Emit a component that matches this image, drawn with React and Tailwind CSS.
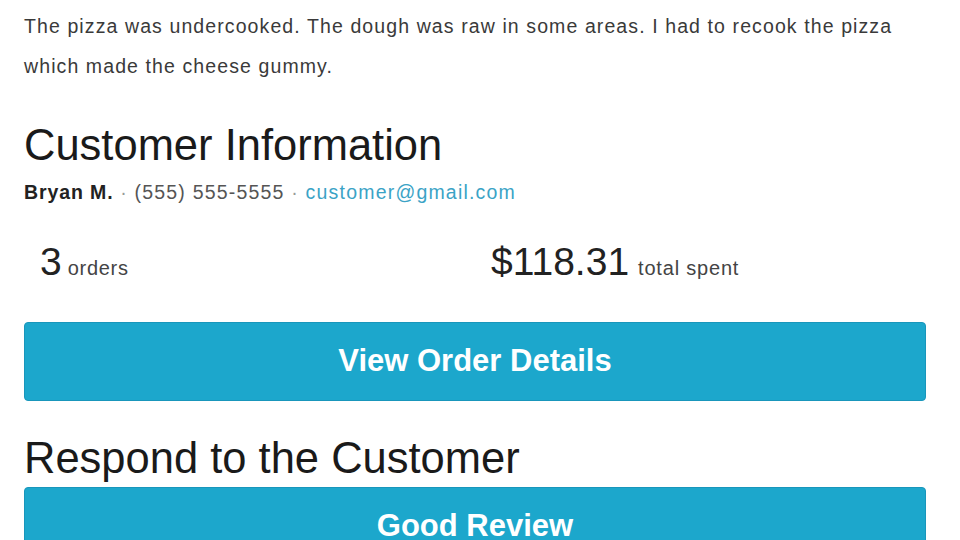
export default function App() {
  const font = { fontFamily: '"Liberation Sans", Arial, sans-serif' };
  return (
    <div className="w-[960px] h-[540px] overflow-hidden bg-white text-[#222]" style={font}>
      <div className="pl-[24px] pr-[34px] pt-[6px]">
        <p className="text-[19.5px] leading-[40px] tracking-[1.1px] text-[#3a3a3a] whitespace-nowrap">
          The pizza was undercooked. The dough was raw in some areas. I had to recook the pizza
          <br />
          which made the cheese gummy.
        </p>
        <h2 className="mt-[35px] text-[43.5px] leading-[48px] text-[#1a1a1a] whitespace-nowrap">Customer Information</h2>
        <div className="mt-[11px] text-[19.5px] leading-[24px] tracking-[1.2px] text-[#555] whitespace-nowrap">
          <span className="font-bold text-[#222] tracking-[0.9px]">Bryan M.</span>
          <span className="text-[#999]"> · </span>
          <span>(555) 555-5555</span>
          <span className="text-[#999]"> · </span>
          <span className="text-[#3ba3c6]">customer@gmail.com</span>
        </div>
        <div className="mt-[36px] grid grid-cols-2">
          <div className="px-[16px] flex items-baseline">
            <span className="text-[39px] leading-[44px] text-[#222]">3</span>
            <span className="ml-[6px] text-[20px] tracking-[0.7px] text-[#444]">orders</span>
          </div>
          <div className="px-[16px] flex items-baseline">
            <span className="text-[39px] leading-[44px] text-[#222]">$118.31</span>
            <span className="ml-[9px] text-[20px] tracking-[0.8px] text-[#444]">total spent</span>
          </div>
        </div>
        <button className="mt-[38px] w-full h-[79px] rounded-[4px] bg-[#1ca7cc] border border-[#1996bb] text-white font-bold text-[31px]">
          View Order Details
        </button>
        <h2 className="mt-[33px] text-[43.5px] leading-[48px] text-[#1a1a1a] whitespace-nowrap">Respond to the Customer</h2>
        <button className="mt-[5px] w-full h-[79px] rounded-[4px] bg-[#1ca7cc] border border-[#1996bb] text-white font-bold text-[31px]">
          Good Review
        </button>
      </div>
    </div>
  );
}
